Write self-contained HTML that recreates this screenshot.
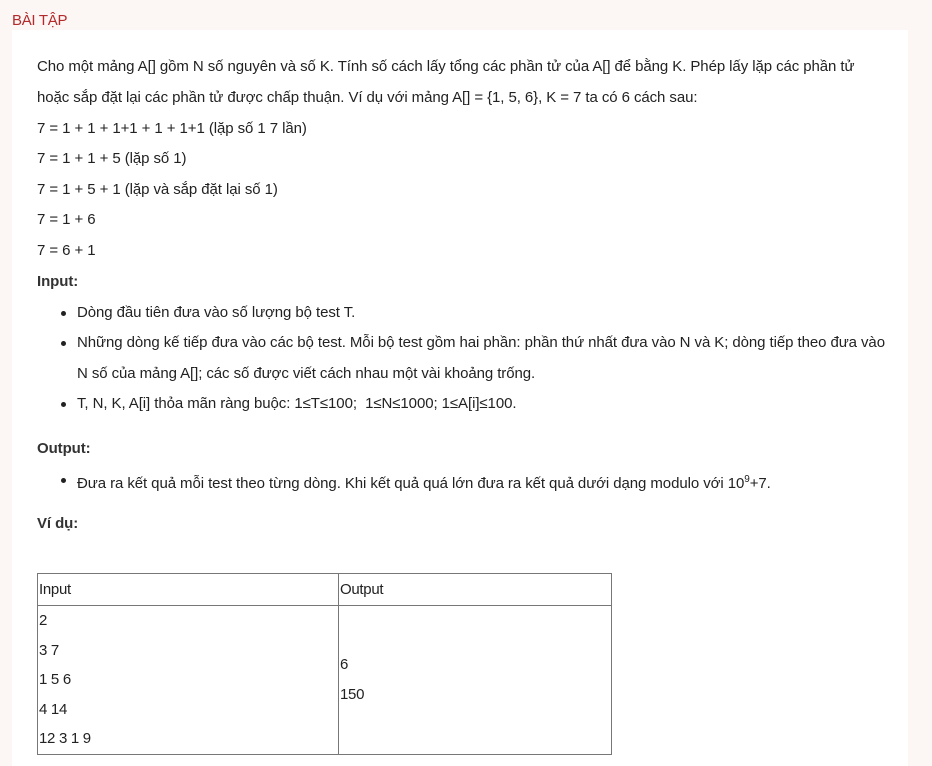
<!DOCTYPE html>
<html><head><meta charset="utf-8"><style>
body{margin:0;width:932px;height:766px;background:#fcf6f5;font-family:"Liberation Sans",sans-serif;color:#222;position:relative;overflow:hidden}
.t{position:absolute;font-size:15px;white-space:nowrap;line-height:20px;letter-spacing:-0.08px}
.title{position:absolute;left:12px;top:12px;color:#b22a2a;font-size:15px;letter-spacing:-0.3px}
.box{position:absolute;left:12px;top:30px;width:896px;height:736px;background:#fff}
.b{font-weight:bold;color:#333}
.dot{position:absolute;width:5px;height:5px;border-radius:50%;background:#222}
table{position:absolute;left:37px;top:573px;border-collapse:collapse;font-size:15px;letter-spacing:-0.3px}
td{border:1px solid #777;vertical-align:middle;padding:0 1px}
</style></head><body>
<div class="title">BÀI TẬP</div>
<div class="box"></div>
<div class="t" style="left:37px;top:57px">Cho một mảng A[] gồm N số nguyên và số K. Tính số cách lấy tổng các phần tử của A[] để bằng K. Phép lấy lặp các phần tử</div>
<div class="t" style="left:37px;top:88px">hoặc sắp đặt lại các phần tử được chấp thuận. Ví dụ với mảng A[] = {1, 5, 6}, K = 7 ta có 6 cách sau:</div>
<div class="t" style="left:37px;top:119px">7 = 1 + 1 + 1+1 + 1 + 1+1 (lặp số 1 7 lần)</div>
<div class="t" style="left:37px;top:149px">7 = 1 + 1 + 5 (lặp số 1)</div>
<div class="t" style="left:37px;top:180px">7 = 1 + 5 + 1 (lặp và sắp đặt lại số 1)</div>
<div class="t" style="left:37px;top:210px">7 = 1 + 6</div>
<div class="t" style="left:37px;top:241px">7 = 6 + 1</div>
<div class="t b" style="left:37px;top:272px">Input:</div>
<div class="dot" style="left:61px;top:311px"></div>
<div class="t" style="left:77px;top:303px">Dòng đầu tiên đưa vào số lượng bộ test T.</div>
<div class="dot" style="left:61px;top:341px"></div>
<div class="t" style="left:77px;top:333px">Những dòng kế tiếp đưa vào các bộ test. Mỗi bộ test gồm hai phần: phần thứ nhất đưa vào N và K; dòng tiếp theo đưa vào</div>
<div class="t" style="left:77px;top:364px">N số của mảng A[]; các số được viết cách nhau một vài khoảng trống.</div>
<div class="dot" style="left:61px;top:402px"></div>
<div class="t" style="left:77px;top:394px">T, N, K, A[i] thỏa mãn ràng buộc: 1≤T≤100;&nbsp; 1≤N≤1000; 1≤A[i]≤100.</div>
<div class="t b" style="left:37px;top:439px">Output:</div>
<div class="dot" style="left:61px;top:478px"></div>
<div class="t" style="left:77px;top:470px">Đưa ra kết quả mỗi test theo từng dòng. Khi kết quả quá lớn đưa ra kết quả dưới dạng modulo với 10<sup style="font-size:10px">9</sup>+7.</div>
<div class="t b" style="left:37px;top:514px">Ví dụ:</div>
<table>
<tr style="height:32px"><td style="width:298px">Input</td><td style="width:270px">Output</td></tr>
<tr style="height:148px"><td style="line-height:29.6px;vertical-align:top;padding-top:0">2<br>3 7<br>1 5 6<br>4 14<br>12 3 1 9</td><td style="line-height:30.4px">6<br>150</td></tr>
</table>
</body></html>
